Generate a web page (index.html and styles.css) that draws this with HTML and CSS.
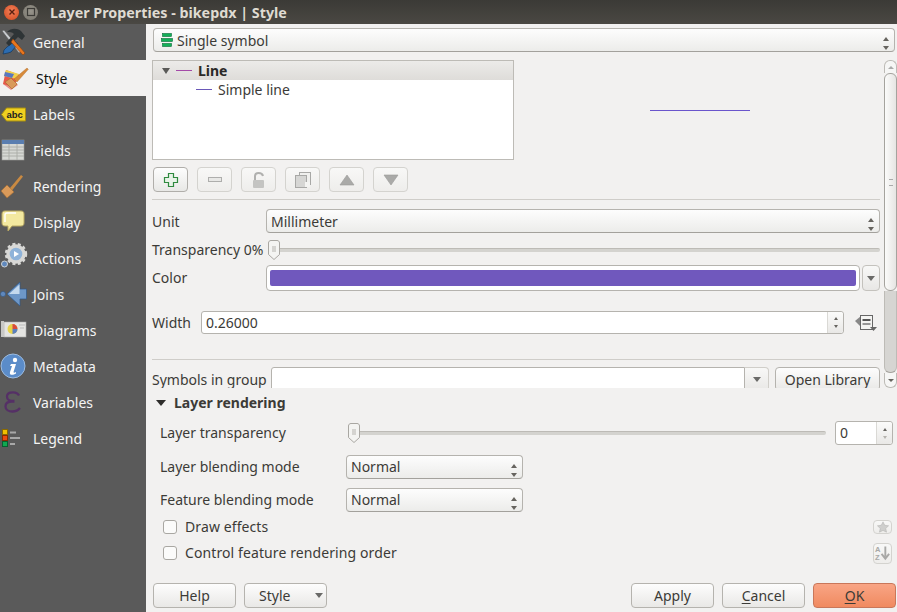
FILE: index.html
```html
<!DOCTYPE html>
<html lang="en">
<head>
<meta charset="utf-8">
<title>Layer Properties - bikepdx | Style</title>
<link rel="stylesheet" href="styles.css">
</head>
<body>
<div class="window">
  <header class="titlebar">
    <span class="wbtn wclose"><svg width="10" height="10" viewBox="0 0 10 10"><path d="M2.500 2.500l5 5M7.500 2.500l-5 5" stroke="#5a2010" stroke-width="1.400"/></svg></span>
    <span class="wbtn wmax"><svg width="10" height="10" viewBox="0 0 10 10"><rect x="1.500" y="1.500" width="7" height="7" fill="none" stroke="#3c3b37" stroke-width="1.200"/></svg></span>
    <span class="wtitle">Layer Properties - bikepdx | Style</span>
  </header>
  <div class="body">
    <nav class="sidebar">
      <div class="nav"><svg class="nico" viewBox="0 0 28 28"><path d="M2 3l2-1 18 21-3 2z" fill="#c9ccd0" stroke="#555" stroke-width=".6"/><path d="M15 13l3 3-7 8-3 1-5 1 1-4 3-3z" fill="#2c6cb0" stroke="#14365c" stroke-width=".7"/><path d="M7 4c4-4 10-4 14-1l4 5-3 4-4-3-9 9-3-3 8-9c-2-2-4-2-7-2z" fill="#2e3436"/><path d="M13 11l12 14-2 2-12-13z" fill="#e8761e" stroke="#8a3d08" stroke-width=".6"/></svg><span>General</span></div>
      <div class="nav active"><svg class="nico" viewBox="0 0 28 28"><path d="M6 6l14 5-7 12-10-3z" fill="#e8584a"/><path d="M6 6l13 4-3 5-12-3z" fill="#f1d14c"/><path d="M5 8l9 2-2 4-8-2z" fill="#5a78c0"/><path d="M3 20l9-6 6 7-7 5z" fill="#e35b4c" opacity=".65"/><path d="M11 14l6 6-5 5-7-7z" fill="#d99a5a" stroke="#a86a2c" stroke-width=".6"/><path d="M14 15L27 4l1.300 1.300L17 18z" fill="#d88a3a" stroke="#a86a2c" stroke-width=".4"/></svg><span>Style</span></div>
      <div class="nav"><svg class="nico" viewBox="0 0 28 28"><path d="M1.500 14.500l5-6.500h19v13h-19z" fill="#f0d020" stroke="#a88f10"/><text x="6.500" y="18" class="abc">abc</text></svg><span>Labels</span></div>
      <div class="nav"><svg class="nico" viewBox="0 0 28 28"><rect x="2" y="4" width="22" height="20" fill="#d6d8d4" stroke="#9a9c98" stroke-width=".6"/><rect x="2" y="4" width="22" height="4" fill="#5a7eb0"/><path d="M2 11h22M2 14h22M2 17h22M2 20h22M9 8v16M17 8v16" stroke="#a9aba6" stroke-width=".9"/></svg><span>Fields</span></div>
      <div class="nav"><svg class="nico" viewBox="0 0 28 28"><path d="M1 19l6-6 7 7-7 6z" fill="#d99a5a" stroke="#a06a30" stroke-width=".6"/><path d="M10 16L21 3l2 1.500L12 18.500z" fill="#c98a42"/></svg><span>Rendering</span></div>
      <div class="nav"><svg class="nico" viewBox="0 0 28 28"><path d="M5 3h16c2 0 3 1 3 3v9c0 2-1 3-3 3H12l-4 5v-5H5c-2 0-3-1-3-3V6c0-2 1-3 3-3z" fill="#f3e9a0" stroke="#b8a860"/><path d="M5 14V7c0-1 1-2 2-2h9" stroke="#fff" fill="none" stroke-width="1.400"/></svg><span>Display</span></div>
      <div class="nav"><svg class="nico" viewBox="0 0 28 28"><circle cx="16" cy="10" r="8" fill="#8fb3d9" stroke="#d8d8d6" stroke-width="3.400"/><circle cx="16" cy="10" r="10" fill="none" stroke="#d8d8d6" stroke-width="2.400" stroke-dasharray="3 2.400"/><path d="M14 7l5 3-5 3z" fill="#fff"/><circle cx="4.500" cy="20" r="3" fill="#5f88bd" stroke="#cfd3d6"/></svg><span>Actions</span></div>
      <div class="nav"><svg class="nico" viewBox="0 0 28 28"><circle cx="3" cy="14" r="2.600" fill="#5f88bd" stroke="#33567f" stroke-width=".6"/><path d="M7 14L20 2v7h6.500v10H20v7z" fill="#6d97c8" stroke="#2e5788" stroke-width=".7"/><path d="M9 14L19.500 4.500V14z" fill="#c4d9ee"/></svg><span>Joins</span></div>
      <div class="nav"><svg class="nico" viewBox="0 0 28 28"><rect x="4" y="6" width="22" height="15" fill="#e4e4e2" stroke="#aaa" stroke-width=".6"/><rect x="1" y="5" width="3" height="16" fill="#c8c8c6"/><circle cx="12.500" cy="13" r="5" fill="#e8d24a"/><path d="M12.500 13V8a5 5 0 0 1 5 5z" fill="#d84a3e"/><path d="M12.500 13h5a5 5 0 0 1-5 5z" fill="#5a7fc0"/><path d="M19 9h6M20 12h4" stroke="#bbb"/></svg><span>Diagrams</span></div>
      <div class="nav"><svg class="nico" viewBox="0 0 28 28"><circle cx="13" cy="14" r="12" fill="#5b8cc9" stroke="#9dbce0"/><circle cx="15" cy="8" r="2.200" fill="#fff"/><path d="M11 12h5l-2.500 8c0 1 1 1 2.500 0v1.500c-3 2-7 2-6-1.500l2-6h-2z" fill="#fff"/></svg><span>Metadata</span></div>
      <div class="nav"><svg class="nico" viewBox="0 0 28 28"><path d="M19 7.500c-1-2.200-3-3.200-6-3.200-4 0-6 1.900-6 4.300s2 4.400 5 4.400h2.500M14.500 13.500H12c-4 0-6.500 1.900-6.500 4.900s3 5.100 7 5.100c3 0 5.500-1 7.500-3.500" fill="none" stroke="#553066" stroke-width="2.300"/></svg><span>Variables</span></div>
      <div class="nav"><svg class="nico" viewBox="0 0 28 28"><rect x="2.500" y="5.500" width="5" height="5" fill="#f0c000" stroke="#8a6a00"/><rect x="2.500" y="11.500" width="5" height="5" fill="#e84a10" stroke="#8a2a00"/><rect x="2.500" y="17.500" width="5" height="5" fill="#10a850" stroke="#066030"/><path d="M10 8.500h6M10 14h10M10 20h5" stroke="#a8a8a8" stroke-width="1.800"/></svg><span>Legend</span></div>
    </nav>
    <main class="main">
      <div class="combo top-combo">
        <svg class="sym" width="12" height="14" viewBox="0 0 12 14"><rect x="1.500" y=".5" width="9" height="3" fill="#12b058" stroke="#0a6a3a" stroke-width=".6"/><rect x=".5" y="5.500" width="11" height="3" fill="#12b058" stroke="#0a6a3a" stroke-width=".6"/><rect x="1.500" y="10.500" width="9" height="3" fill="#12b058" stroke="#0a6a3a" stroke-width=".6"/></svg>
        <span>Single symbol</span><span class="updown"></span>
      </div>
      <div class="scrollarea">
        <div class="scrollcontent">
          <div class="preview-row">
            <div class="tree">
              <div class="tree-head"><span class="tri"></span><span class="swatch swatch-pink"></span><b>Line</b></div>
              <div class="tree-child"><span class="swatch swatch-blue"></span><span>Simple line</span></div>
            </div>
            <div class="preview"><span class="preview-line"></span></div>
          </div>
          <div class="tools">
            <span class="tool on"><svg width="16" height="16" viewBox="0 0 16 16"><path d="M5.500 1.500h5v4h4v5h-4v4h-5v-4h-4v-5h4z" fill="#e8f3e8" stroke="#2f8a3f" stroke-width="1.200"/></svg></span>
            <span class="tool"><svg width="16" height="16" viewBox="0 0 16 16"><rect x="1.500" y="5.500" width="13" height="4" fill="#e8e8e6" stroke="#aeaeac"/></svg></span>
            <span class="tool"><svg width="16" height="18" viewBox="0 0 16 18"><path d="M4 9V5c0-4 7-4 8 0" fill="none" stroke="#b0b0ae" stroke-width="2"/><rect x="2" y="9" width="11" height="8" rx="1" fill="#c4c4c2"/></svg></span>
            <span class="tool"><svg width="18" height="18" viewBox="0 0 18 18"><rect x="5.500" y="1.500" width="11" height="12" fill="#f0f0ee" stroke="#a8a8a6"/><rect x="1.500" y="4.500" width="11" height="12" fill="#d6d6d4" stroke="#a8a8a6"/><rect x="11" y="11" width="5" height="5" fill="#f4f4f2"/></svg></span>
            <span class="tool"><svg width="16" height="12" viewBox="0 0 16 12"><path d="M8 1l7 10H1z" fill="#aaaaa8" stroke="#9a9a98" stroke-width=".6"/></svg></span>
            <span class="tool"><svg width="16" height="12" viewBox="0 0 16 12"><path d="M8 11L1 1h14z" fill="#aaaaa8" stroke="#9a9a98" stroke-width=".6"/></svg></span>
          </div>
          <hr class="rule rule-a">
          <div class="row row-unit"><label class="lab lab-wide">Unit</label><div class="combo grow"><span>Millimeter</span><span class="updown"></span></div></div>
          <div class="row row-transp"><label class="lab-inline">Transparency 0%</label><div class="slider grow"><span class="track"></span><svg class="handle" width="12" height="20" viewBox="0 0 12 20"><path d="M3 .5h6c1.500 0 2.500 1 2.500 2.500v11.500L6 19.500.5 14.500V3C.5 1.500 1.500.5 3 .5z" fill="#f4f4f2" stroke="#a9a7a2"/><path d="M4 7h4M4 9h4M4 11h4" stroke="#b5b3ae"/></svg></div></div>
          <div class="row row-color"><label class="lab lab-wide">Color</label><div class="colorbtn grow"><span class="colorfill"></span></div><span class="dropbtn"><i class="arrow"></i></span></div>
          <div class="row row-width"><label class="lab-w">Width</label>
            <div class="spin grow"><span class="spinval">0.26000</span><span class="spinbtns"><i class="up"></i><i class="down"></i></span></div>
            <svg class="ddicon" width="24" height="20" viewBox="0 0 24 20"><path d="M1 8l6-5v11z" fill="#888"/><rect x="6.500" y="2.500" width="12" height="14" fill="#f4f4f2" stroke="#666"/><path d="M8.500 6h8v2h-8z" fill="#555"/><path d="M8.500 11h8" stroke="#777" stroke-width="1.500"/><path d="M16 14h7l-3.500 4z" fill="#666"/></svg>
          </div>
          <hr class="rule rule-b">
          <div class="row row-symbols"><label class="lab-sym">Symbols in group</label>
            <div class="editcombo grow"><span class="editfield"></span><span class="editdrop"><i class="arrow"></i></span></div>
            <span class="btn openlib">Open Library</span>
          </div>
        </div>
        <div class="scrollbar"><span class="sb-up"><i class="sb-a-up"></i></span><span class="sb-thumb"><i></i></span><span class="sb-track"></span><span class="sb-down"><i class="sb-a-down"></i></span></div>
      </div>
      <section class="rendering">
        <h2 class="rhead"><span class="rtri"></span><span>Layer rendering</span></h2>
        <div class="rrow rrow-t"><label class="rlab">Layer transparency</label><div class="slider grow"><span class="track"></span><svg class="handle" width="12" height="20" viewBox="0 0 12 20"><path d="M3 .5h6c1.500 0 2.500 1 2.500 2.500v11.500L6 19.500.5 14.500V3C.5 1.500 1.500.5 3 .5z" fill="#f4f4f2" stroke="#a9a7a2"/><path d="M4 7h4M4 9h4M4 11h4" stroke="#b5b3ae"/></svg></div>
          <div class="spin spin0"><span class="spinval">0</span><span class="spinbtns"><i class="up"></i><i class="down dim"></i></span></div></div>
        <div class="rrow rrow-b1"><label class="rlab">Layer blending mode</label><div class="combo small"><span class="ctext">Normal</span><span class="updown"></span></div></div>
        <div class="rrow rrow-b2"><label class="rlab">Feature blending mode</label><div class="combo small"><span class="ctext">Normal</span><span class="updown"></span></div></div>
        <div class="crow crow-a"><span class="check"></span><span class="clab">Draw effects</span>
          <span class="mini mini-star"><svg width="12" height="12" viewBox="0 0 14 14"><path d="M7 1l2 4 4.500.6-3.300 3 .9 4.400L7 11l-4.100 2 .9-4.400-3.300-3L5 5z" fill="#cfcfcd" stroke="#b0b0ae" stroke-width=".6"/></svg></span></div>
        <div class="crow crow-b"><span class="check"></span><span class="clab">Control feature rendering order</span>
          <span class="mini mini-az"><svg width="18" height="18" viewBox="0 0 18 18"><text x="1" y="8" class="az">A</text><text x="1" y="16" class="az">Z</text><path d="M12 2v11M8 10l4 5 4-5" fill="none" stroke="#a8a8a6" stroke-width="2"/></svg></span></div>
      </section>
      <footer class="buttons">
        <span class="btn fbtn">Help</span>
        <span class="btn fbtn stylebtn"><span>Style</span><i class="arrow"></i></span>
        <span class="spacer"></span>
        <span class="btn fbtn">Apply</span>
        <span class="btn fbtn"><span><u>C</u>ancel</span></span>
        <span class="btn fbtn okbtn"><span><u>O</u>K</span></span>
      </footer>
    </main>
  </div>
</div>
</body>
</html>
```

FILE: styles.css
```css
* { box-sizing: border-box; }
html, body { margin: 0; padding: 0; }
body { width: 897px; height: 612px; overflow: hidden; font-family: "Noto Sans", "Open Sans", sans-serif; font-size: 14px; color: #3c3b37; background: #f2f1f0; }
.window { width: 897px; height: 612px; display: flex; flex-direction: column; }

.titlebar { height: 24px; flex: none; display: flex; align-items: center; padding-left: 4px; background: linear-gradient(#3b3a36, #4a4843); }
.wbtn { width: 15px; height: 15px; border-radius: 50%; display: flex; align-items: center; justify-content: center; margin-right: 4px; }
.wclose { background: radial-gradient(circle at 50% 40%, #f2805a, #d2481c); }
.wmax { background: radial-gradient(circle at 50% 40%, #98958c, #77746b); }
.wtitle { margin-left: 8px; font-weight: 700; font-size: 14.3px; color: #dfdbd2; white-space: nowrap; }

.body { flex: 1; display: flex; min-height: 0; }
.sidebar { width: 146px; flex: none; background: #5a5a5a; }
.nav { height: 36px; display: flex; align-items: center; color: #f4f4f4; }
.nav span { margin-left: 5px; }
.nico { width: 28px; height: 28px; flex: none; overflow: visible; }
.active { background: #f2f1f0; color: #111; }
.active span { margin-left: 8px; }
.abc { font-family: "Liberation Sans", sans-serif; font-size: 9.5px; font-weight: 700; fill: #222; }
.az { font-family: "Liberation Sans", sans-serif; font-size: 8px; font-weight: 700; fill: #a8a8a6; }

.main { flex: 1; min-width: 0; display: flex; flex-direction: column; }
.combo { height: 24px; display: flex; align-items: center; padding: 0 4px; border: 1px solid #b5b3ae; border-bottom-color: #a3a19c; border-radius: 4px; background: linear-gradient(#fdfdfd, #ececea); }
.combo .updown { margin-left: auto; }
.updown { width: 7px; height: 13px; flex: none; margin-right: 0; margin-top: 6px; position: relative; }
.updown::before, .updown::after { content: ""; position: absolute; left: 0; border-left: 3.500px solid transparent; border-right: 3.500px solid transparent; }
.updown::before { top: 0; border-bottom: 4px solid #66645f; }
.updown::after { bottom: 0; border-top: 4px solid #66645f; }
.ctext { padding-bottom: 2px; }
.grow { flex: 1; min-width: 0; }
.top-combo { margin: 4px 2px 0 7px; flex: none; }
.sym { margin-right: 4px; margin-left: 3px; flex: none; }

.scrollarea { flex: none; height: 328px; margin-top: 8px; display: flex; overflow: hidden; }
.scrollcontent { width: 734px; padding-left: 6px; flex: none; }
.preview-row { display: flex; height: 100px; }
.tree { width: 362px; height: 100px; border: 1px solid #bdbbb6; background: #fff; flex: none; }
.tree-head { height: 19px; display: flex; align-items: center; background: linear-gradient(#ecebe9, #dedcd9); color: #2a2927; }
.tri { width: 0; height: 0; margin-left: 9px; border-left: 4px solid transparent; border-right: 4px solid transparent; border-top: 6px solid #5a5a58; }
.swatch { width: 16px; height: 1px; flex: none; }
.swatch-pink { background: #a44aa8; margin-left: 6px; margin-right: 6px; }
.swatch-blue { background: #6a58b8; margin-left: 43px; margin-right: 6px; }
.tree-child { height: 18px; display: flex; align-items: center; }
.preview { flex: 1; position: relative; display: flex; align-items: center; padding-left: 136px; }
.preview-line { width: 100px; height: 1px; background: #6a55cc; }

.tools { display: flex; gap: 9px; padding-left: 1px; margin-top: 7px; height: 25px; }
.tool { width: 35px; height: 25px; display: flex; align-items: center; justify-content: center; border: 1px solid #d4d3cf; border-radius: 4px; background: linear-gradient(#f8f8f7, #eeedeb); }
.tool.on { border-color: #b0aeaa; background: linear-gradient(#fdfdfd, #e8e8e6); }

.rule { border: 0; height: 1px; background: #cfcdc9; margin: 0; }
.rule-a { margin-top: 7px; }
.row { display: flex; align-items: center; }
.row-unit { margin-top: 9px; height: 24px; }
.lab-wide { width: 114px; flex: none; }
.row-transp { height: 22px; margin-top: 6px; }
.lab-inline { width: 116px; flex: none; white-space: nowrap; padding-bottom: 2px; }
.slider { position: relative; height: 20px; }
.track { position: absolute; left: 0; right: 0; top: 8px; height: 4px; border-radius: 2px; background: #d4d3cf; border-top: 1px solid #bdbbb6; }
.handle { position: absolute; left: 0; top: 0; }
.row-color { height: 26px; margin-top: 4px; }
.row-color .lab { padding-bottom: 2px; }
.colorbtn { height: 26px; padding: 4px 3px; border: 1px solid #b5b3ae; border-radius: 4px; background: #fff; }
.colorfill { display: block; height: 16px; border-radius: 2px; background: #7058bd; }
.dropbtn { width: 18px; height: 26px; margin-left: 2px; display: flex; align-items: center; justify-content: center; border: 1px solid #c4c2bd; border-radius: 4px; background: linear-gradient(#f8f8f7, #e8e7e5); }
.arrow { width: 0; height: 0; border-left: 4px solid transparent; border-right: 4px solid transparent; border-top: 5px solid #6a6a68; display: block; }
.row-width { height: 23px; margin-top: 20px; }
.lab-w { width: 49px; flex: none; }
.spin { height: 23px; display: flex; border: 1px solid #b5b3ae; border-radius: 3px; background: #fff; }
.spinval { flex: 1; padding-left: 4px; line-height: 21px; color: #3c3b37; }
.spinbtns { width: 16px; flex: none; display: flex; flex-direction: column; align-items: center; justify-content: space-around; padding: 3px 0; border-left: 1px solid #dad9d5; background: linear-gradient(#fbfbfa, #e9e8e6); border-radius: 0 3px 3px 0; }
.spinbtns i { width: 0; height: 0; border-left: 2.500px solid transparent; border-right: 2.500px solid transparent; }
.spinbtns .up { border-bottom: 3px solid #66645f; }
.spinbtns .down { border-top: 3px solid #66645f; }
.spinbtns .dim { border-top-color: #b5b3ae; }
.ddicon { flex: none; margin-left: 10px; margin-right: 2px; }
.rule-b { margin-top: 25px; }
.row-symbols { height: 24px; margin-top: 7px; align-items: flex-start; }
.lab-sym { width: 119px; flex: none; line-height: 26px; white-space: nowrap; }
.editcombo { display: flex; height: 24px; }
.editfield { flex: 1; border: 1px solid #b5b3ae; border-radius: 3px 0 0 3px; background: #fff; }
.editdrop { width: 24px; flex: none; display: flex; align-items: center; justify-content: center; border: 1px solid #d0cec9; border-left: 0; border-radius: 0 4px 4px 0; background: linear-gradient(#f8f8f7, #e9e8e6); }
.btn { display: flex; align-items: center; justify-content: center; border: 1px solid #b5b3ae; border-radius: 4px; background: linear-gradient(#fdfdfd, #e9e8e6); }
.openlib { width: 105px; height: 24px; margin-left: 6px; flex: none; }

.scrollbar { width: 13px; margin-left: 4px; flex: none; display: flex; flex-direction: column; }
.sb-up, .sb-down { flex: none; display: flex; align-items: center; justify-content: center; border: 1px solid #bdbbb6; background: #f6f6f5; }
.sb-up { height: 13px; border-radius: 6px 6px 0 0; border-bottom: 0; }
.sb-down { height: 15px; border-radius: 0 0 6px 6px; border-top: 0; }
.sb-a-up { border-left: 3px solid transparent; border-right: 3px solid transparent; border-bottom: 3px solid #aaa; }
.sb-a-down { border-left: 3px solid transparent; border-right: 3px solid transparent; border-top: 3px solid #66645f; }
.sb-thumb { height: 218px; flex: none; border: 1px solid #a5a39e; border-radius: 6px; background: linear-gradient(90deg, #fbfbfa, #e6e5e3); display: flex; align-items: center; justify-content: center; }
.sb-thumb i { width: 4px; height: 7px; border-top: 1px solid #aaa; border-bottom: 1px solid #aaa; }
.sb-track { flex: 1; background: #d6d5d2; border-left: 1px solid #bdbbb6; border-right: 1px solid #bdbbb6; border-bottom: 1px solid #a5a39e; border-radius: 0 0 6px 6px; }

.rendering { flex: none; }
.rhead { margin: 0; height: 30px; display: flex; align-items: center; padding-left: 10px; font-size: 14px; font-weight: 700; color: #3c3b37; }
.rhead span:last-child { padding-bottom: 2px; }
.rtri { width: 0; height: 0; margin-right: 8px; border-left: 5px solid transparent; border-right: 5px solid transparent; border-top: 6px solid #2e2d2b; }
.rrow { display: flex; align-items: center; padding-left: 14px; height: 24px; }
.rlab { width: 186px; flex: none; white-space: nowrap; padding-bottom: 2px; }
.rrow-t { margin-top: 3px; padding-right: 4px; }
.rrow-t .rlab { width: 188px; }
.spin0 { width: 58px; height: 24px; margin-left: 9px; flex: none; }
.rrow-b1 { margin-top: 10px; }
.rrow-b2 { margin-top: 9px; }
.small { width: 177px; }
.crow { display: flex; align-items: center; padding-left: 17px; padding-right: 5px; }
.crow-a { height: 14px; margin-top: 8px; }
.crow-b { height: 14px; margin-top: 12px; }
.check { width: 14px; height: 14px; flex: none; border: 1px solid #a9a7a2; border-radius: 3px; background: #fbfbfa; }
.clab { margin-left: 8px; padding-bottom: 2px; letter-spacing: .1px; }
.mini { margin-left: auto; width: 19px; display: flex; align-items: center; justify-content: center; flex: none; border: 1px solid #d4d3cf; border-radius: 4px; background: linear-gradient(#f8f8f7, #eeedeb); }
.mini-star { height: 14px; }
.mini-az { height: 21px; }

.buttons { flex: none; display: flex; gap: 8px; padding: 0 1px 0 7px; margin-top: 23px; }
.fbtn { width: 83px; height: 25px; }
.spacer { flex: 1; }
.stylebtn { justify-content: flex-start; padding-left: 14px; }
.stylebtn .arrow { margin-left: auto; margin-right: 3px; }
.okbtn { background: linear-gradient(#f9a585, #f08a60); border-color: #c9775a; }
u { text-decoration-thickness: 1px; text-underline-offset: 2px; }
```
